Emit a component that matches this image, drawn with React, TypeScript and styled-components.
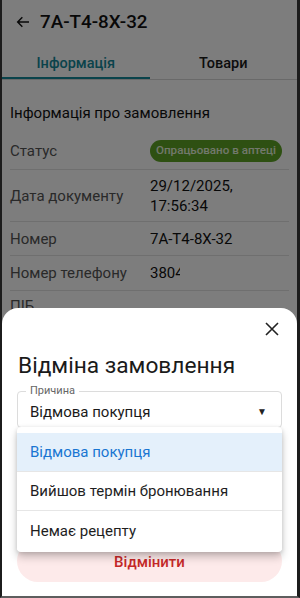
import React from "react";
import styled, { createGlobalStyle } from "styled-components";

const Global = createGlobalStyle`
  html, body { margin: 0; padding: 0; background: #1c1c1c; }
  body { font-family: Roboto, "Noto Sans", "Liberation Sans", sans-serif; }
  * { box-sizing: border-box; }
`;

const Frame = styled.div`
  position: relative;
  width: 300px;
  height: 598px;
  overflow: hidden;
  border-left: 2px solid #1c1c1c;
  border-right: 3px solid #1c1c1c;
  border-bottom: 2px solid #5e5e5e;
  background: #ffffff;
`;

const Header = styled.div`
  display: flex;
  align-items: center;
  height: 44px;
  padding: 0 0 0 13px;
  gap: 9px;
`;

const Title = styled.div`
  font-size: 18.8px;
  font-weight: 500;
  color: #111;
`;

const Tabs = styled.div`
  display: grid;
  grid-template-columns: 1fr 1fr;
  margin-top: 6px;
  border-bottom: 1px solid #d6d6d6;
`;

const Tab = styled.div<{ $active?: boolean }>`
  height: 29px;
  display: flex;
  align-items: center;
  justify-content: center;
  font-size: 14.5px;
  font-weight: 500;
  color: ${(p) => (p.$active ? "#15899a" : "#1a1a1a")};
  border-bottom: 2px solid ${(p) => (p.$active ? "#15899a" : "transparent")};
`;

const Content = styled.div`
  padding: 23px 8px 0 8px;
`;

const SectionTitle = styled.div`
  font-size: 15px;
  color: #111;
  line-height: 20px;
  margin-bottom: 9px;
`;

const Row = styled.div<{ $h: number }>`
  display: grid;
  grid-template-columns: 140px 1fr;
  align-items: center;
  min-height: ${(p) => p.$h}px;
  border-bottom: 1px solid #e2e2e2;
`;

const Label = styled.div`
  font-size: 15px;
  color: #555;
  white-space: nowrap;
`;

const Value = styled.div<{ $w?: number }>`
  font-size: 15px;
  color: #111;
  line-height: 20px;
  overflow: hidden;
  white-space: nowrap;
  ${(p) => (p.$w ? `width: ${p.$w}px;` : "")}
`;

const Chip = styled.span`
  display: inline-block;
  white-space: nowrap;
  background: #5ea326;
  color: #e8f4dc;
  font-size: 11.6px;
  font-weight: 500;
  border-radius: 11px;
  padding: 3px 6px 4px;
  line-height: 15px;
`;

const Backdrop = styled.div`
  position: absolute;
  inset: 0;
  background: rgba(0, 0, 0, 0.51);
`;

const Sheet = styled.div`
  position: absolute;
  left: 0;
  right: 0;
  top: 308px;
  bottom: 0;
  background: #fff;
  border-radius: 16px 16px 0 0;
  padding: 0 15px 0 15px;
  display: flex;
  flex-direction: column;
`;

const CloseRow = styled.div`
  display: flex;
  justify-content: flex-end;
  padding: 14px 3px 0 0;
  height: 32px;
`;

const SheetTitle = styled.div`
  font-size: 22.7px;
  color: #1a1a1a;
  line-height: 32px;
  margin-top: 10px;
  margin-left: 1px;
`;

const Field = styled.div`
  position: relative;
  margin-top: 9px;
  height: 37px;
  border: 1px solid #dcdcdc;
  border-radius: 4px;
  display: flex;
  align-items: center;
  justify-content: space-between;
  padding: 4px 14px 0 12px;
`;

const FieldLabel = styled.span`
  position: absolute;
  top: -8px;
  left: 8px;
  padding: 0 4px;
  background: #fff;
  font-size: 11px;
  color: #666;
  line-height: 14px;
`;

const FieldValue = styled.span`
  font-size: 15px;
  color: #1a1a1a;
`;

const Arrow = styled.span`
  font-size: 10px;
  color: #222;
`;

const CancelButton = styled.div`
  margin-top: auto;
  margin-bottom: 14px;
  height: 42px;
  border-radius: 21px;
  background: #fdeaea;
  color: #c62828;
  font-size: 15px;
  font-weight: 500;
  display: flex;
  align-items: center;
  justify-content: center;
  padding-top: 2px;
`;

const Menu = styled.div`
  position: absolute;
  left: 15px;
  right: 15px;
  top: 119px;
  height: 125px;
  background: #fff;
  border-radius: 4px;
  box-shadow: 0 5px 8px rgba(0, 0, 0, 0.22), 0 1px 4px rgba(0, 0, 0, 0.12);
  padding-top: 6px;
  overflow: hidden;
`;

const Item = styled.div<{ $selected?: boolean }>`
  height: 39px;
  display: flex;
  align-items: center;
  padding-left: 13px;
  font-size: 15px;
  color: ${(p) => (p.$selected ? "#1976d2" : "#1e1e1e")};
  background: ${(p) => (p.$selected ? "#e4f0fb" : "#fff")};
  border-bottom: 1px solid #e6e6e6;
  &:last-child { border-bottom: none; }
`;

export default function App() {
  return (
    <>
      <Global />
      <Frame>
        <Header>
          <svg width="16" height="16" viewBox="0 0 24 24" fill="none" stroke="#111" strokeWidth="2.2">
            <path d="M21 12H4M11 5l-7 7 7 7" />
          </svg>
          <Title>7A-T4-8X-32</Title>
        </Header>
        <Tabs>
          <Tab $active>Інформація</Tab>
          <Tab>Товари</Tab>
        </Tabs>
        <Content>
          <SectionTitle>Інформація про замовлення</SectionTitle>
          <Row $h={38}>
            <Label>Статус</Label>
            <div><Chip>Опрацьовано в аптеці</Chip></div>
          </Row>
          <Row $h={52}>
            <Label>Дата документу</Label>
            <Value>29/12/2025,<br />17:56:34</Value>
          </Row>
          <Row $h={34}>
            <Label>Номер</Label>
            <Value>7A-T4-8X-32</Value>
          </Row>
          <Row $h={35}>
            <Label>Номер телефону</Label>
            <Value $w={30}>380442</Value>
          </Row>
          <Row $h={30}>
            <Label>ПІБ</Label>
            <Value></Value>
          </Row>
        </Content>
        <Backdrop />
        <Sheet>
          <CloseRow>
            <svg width="14" height="14" viewBox="0 0 14 14" stroke="#222" strokeWidth="1.6">
              <path d="M1 1l12 12M13 1L1 13" />
            </svg>
          </CloseRow>
          <SheetTitle>Відміна замовлення</SheetTitle>
          <Field>
            <FieldLabel>Причина</FieldLabel>
            <FieldValue>Відмова покупця</FieldValue>
            <Arrow>▼</Arrow>
          </Field>
          <CancelButton>Відмінити</CancelButton>
          <Menu>
            <Item $selected>Відмова покупця</Item>
            <Item>Вийшов термін бронювання</Item>
            <Item>Немає рецепту</Item>
          </Menu>
        </Sheet>
      </Frame>
    </>
  );
}
